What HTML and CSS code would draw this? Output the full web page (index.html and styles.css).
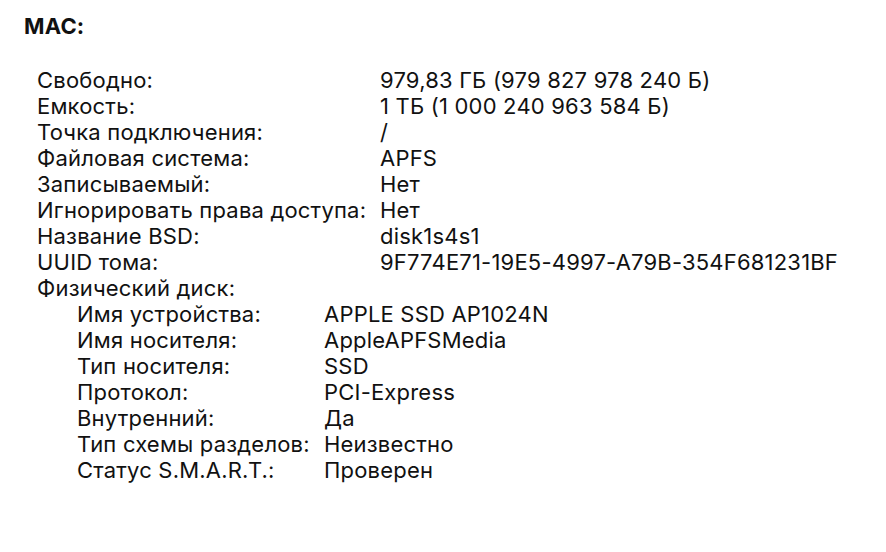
FILE: index.html
```html
<!DOCTYPE html>
<html lang="ru">
<head>
<meta charset="utf-8">
<link rel="stylesheet" href="styles.css">
</head>
<body>
<div class="page">
  <div class="title">MAC:</div>
  <div class="info">
    <div class="row"><span class="label">Свободно:</span><span class="value">979,83 ГБ (979 827 978 240 Б)</span></div>
    <div class="row"><span class="label">Емкость:</span><span class="value">1 ТБ (1 000 240 963 584 Б)</span></div>
    <div class="row"><span class="label">Точка подключения:</span><span class="value">/</span></div>
    <div class="row"><span class="label">Файловая система:</span><span class="value">APFS</span></div>
    <div class="row"><span class="label">Записываемый:</span><span class="value">Нет</span></div>
    <div class="row"><span class="label">Игнорировать права доступа:</span><span class="value">Нет</span></div>
    <div class="row"><span class="label">Название BSD:</span><span class="value">disk1s4s1</span></div>
    <div class="row"><span class="label">UUID тома:</span><span class="value">9F774E71-19E5-4997-A79B-354F681231BF</span></div>
    <div class="row"><span class="label">Физический диск:</span></div>
    <div class="sub">
      <div class="row"><span class="label">Имя устройства:</span><span class="value">APPLE SSD AP1024N</span></div>
      <div class="row"><span class="label">Имя носителя:</span><span class="value">AppleAPFSMedia</span></div>
      <div class="row"><span class="label">Тип носителя:</span><span class="value">SSD</span></div>
      <div class="row"><span class="label">Протокол:</span><span class="value">PCI-Express</span></div>
      <div class="row"><span class="label">Внутренний:</span><span class="value">Да</span></div>
      <div class="row"><span class="label">Тип схемы разделов:</span><span class="value">Неизвестно</span></div>
      <div class="row"><span class="label">Статус S.M.A.R.T.:</span><span class="value">Проверен</span></div>
    </div>
  </div>
</div>
</body>
</html>
```
FILE: styles.css
```css
html, body {
  margin: 0;
  padding: 0;
  background: #ffffff;
}
body {
  font-family: Inter, "Liberation Sans", sans-serif;
  color: #111111;
  font-size: 22px;
  line-height: 26px;
  letter-spacing: 0.2px;
}
.page {
  padding: 13px 0 0 24px;
}
.title {
  font-weight: 700;
  font-size: 22px;
}
.info {
  margin-top: 28px;
  padding-left: 13px;
}
.row {
  display: flex;
  white-space: nowrap;
}
.label {
  flex: 0 0 343px;
}
.sub {
  padding-left: 40px;
}
.sub .label {
  flex: 0 0 247px;
}
```
